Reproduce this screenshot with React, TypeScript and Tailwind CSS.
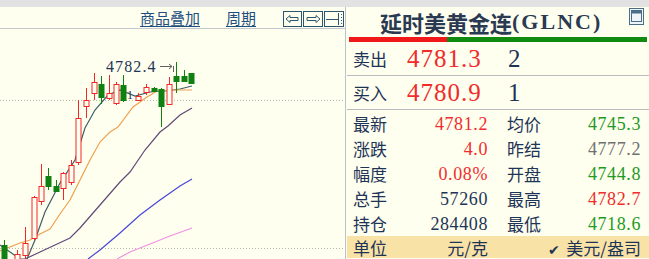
import React from 'react';

const NAVY = 'text-[#1e3456]';
const NUM = { fontFamily: '"Liberation Serif", "Noto Sans CJK SC", serif' };
const CJK = { fontFamily: '"Noto Sans CJK SC", "Liberation Sans", sans-serif' };

type Candle = [number, number, number, number, number, 'r' | 'g'];

const candles: Candle[] = [
  [4, 245, 259, 240, 259, 'g'],
  [17, 254, 262, 250, 262, 'r'],
  [25, 243, 255, 227, 260, 'r'],
  [34, 197, 238, 196, 240, 'r'],
  [41, 186, 201, 164, 205, 'r'],
  [48, 176, 186, 168, 190, 'g'],
  [56, 186, 191, 180, 192, 'g'],
  [63, 173, 188, 172, 200, 'r'],
  [71, 165, 182, 160, 185, 'r'],
  [78, 118, 162, 100, 165, 'r'],
  [86, 100, 106, 88, 118, 'r'],
  [94, 82, 93, 73, 100, 'r'],
  [101, 84, 97, 76, 104, 'g'],
  [109, 93, 98, 75, 100, 'r'],
  [116, 84, 103, 82, 105, 'r'],
  [123, 85, 100, 75, 102, 'g'],
  [138, 96, 100, 93, 101, 'r'],
  [146, 87, 92, 84, 95, 'r'],
  [154, 88, 91, 87, 92, 'g'],
  [161, 89, 106, 88, 127, 'g'],
  [169, 84, 104, 77, 105, 'r'],
  [176, 76, 81, 62, 93, 'g'],
  [184, 76, 81, 70, 82, 'g'],
  [191, 73, 83, 73, 83, 'g'],
];

const lines = [
  {
    color: '#3f5f66',
    pts: '0,245 10,252 20,259 27,259 35,240 45,212 60,183 75,160 85,128 95,110 108,95 120,90 135,96 150,92 165,91 180,89 192,86',
  },
  {
    color: '#f0a050',
    pts: '0,251 20,243 30,240 40,234 50,229 60,214 70,200 80,180 90,160 100,142 110,132 118,127 133,107 147,97 157,91 175,90 192,90',
  },
  {
    color: '#604a78',
    pts: '25,259 40,252 55,245 70,238 80,228 100,205 120,182 130,172 145,150 160,132 168,126 180,115 192,108',
  },
  { color: '#4848d8', pts: '88,259 100,250 120,233 140,215 160,200 180,186 192,179' },
  { color: '#f090e0', pts: '117,259 130,252 150,244 170,236 192,228' },
];

function Chart() {
  return (
    <svg className="block" width="345" height="230" viewBox="0 29 345 230">
      <line x1="0" y1="100.5" x2="345" y2="100.5" stroke="#b8b8b0" strokeDasharray="1 2" />
      <line x1="0" y1="248.5" x2="345" y2="248.5" stroke="#b8b8b0" strokeDasharray="1 2" />
      {lines.map((l, i) => (
        <polyline key={i} points={l.pts} fill="none" stroke={l.color} strokeWidth="1.2" />
      ))}
      {candles.map(([x, t, b, wt, wb, c], i) => {
        const col = c === 'r' ? '#f02828' : '#108010';
        return (
          <g key={i}>
            <line x1={x + 0.5} y1={wt} x2={x + 0.5} y2={t} stroke={col} />
            <line x1={x + 0.5} y1={b} x2={x + 0.5} y2={wb} stroke={col} />
            <rect
              x={x - 2}
              y={t + 0.5}
              width="5"
              height={b - t}
              fill={c === 'r' ? '#fffff0' : col}
              stroke={col}
            />
          </g>
        );
      })}
      <text x="127" y="99" fontSize="12" fill="#1e3456" style={NUM}>
        1
      </text>
      <text x="106" y="72" fontSize="16" letterSpacing="1.1" fill="#1e3456" style={NUM}>
        4782.4
      </text>
      <line x1="160" y1="66.5" x2="172" y2="66.5" stroke="#606060" />
      <polyline points="169,64 172,66.5 169,69" fill="none" stroke="#606060" />
      <line x1="173.5" y1="66" x2="173.5" y2="72" stroke="#606060" />
    </svg>
  );
}

function NavIcons() {
  return (
    <svg width="62" height="16" viewBox="0 0 62 16" className="block">
      <g fill="none" stroke="#2c5670" strokeWidth="1">
        <rect x="0.5" y="0.5" width="18" height="15" />
        <rect x="20.5" y="0.5" width="19" height="15" />
        <rect x="41.5" y="0.5" width="19" height="15" />
        <path d="M3 8 L7 4.5 V6.5 H15 V9.5 H7 V11.5 Z" />
        <path d="M37 8 L33 4.5 V6.5 H24 V9.5 H33 V11.5 Z" />
        <line x1="43" y1="8.5" x2="56" y2="8.5" />
        <line x1="55.5" y1="2" x2="55.5" y2="14" />
      </g>
      <g fill="#2c5670">
        <rect x="58" y="3" width="1" height="1" />
        <rect x="58" y="6" width="1" height="1" />
        <rect x="58" y="9" width="1" height="1" />
        <rect x="58" y="12" width="1" height="1" />
      </g>
    </svg>
  );
}

function Row({
  l1,
  v1,
  c1,
  l2,
  v2,
  c2,
}: {
  l1: string;
  v1: string;
  c1: string;
  l2: string;
  v2: string;
  c2: string;
}) {
  return (
    <div className="flex h-[25px] items-center">
      <span className={`w-[40px] text-[17px] ${NAVY}`} style={CJK}>
        {l1}
      </span>
      <span className={`w-[95px] text-right text-[18px] tracking-[0.6px] ${c1}`} style={NUM}>
        {v1}
      </span>
      <span className={`ml-[19px] w-[40px] text-[17px] ${NAVY}`} style={CJK}>
        {l2}
      </span>
      <span className={`flex-1 text-right text-[18px] tracking-[0.6px] ${c2}`} style={NUM}>
        {v2}
      </span>
    </div>
  );
}

const RED = 'text-[#f02c2c]';
const GREEN = 'text-[#229a22]';

export default function App() {
  return (
    <div className="flex h-[259px] w-[649px] flex-col overflow-hidden bg-[#fffff0] leading-none">
      <div className="h-[7px] shrink-0 bg-[#e2e2e2]" />
      <div className="flex flex-1">
        {/* chart */}
        <div className="flex w-[345px] flex-col">
          <div className="flex h-[22px] shrink-0 items-center justify-end border-b border-[#c4c8cc]">
            <span
              className="text-[15px] text-[#1c4f80] underline underline-offset-2"
              style={CJK}
            >
              商品叠加
            </span>
            <span
              className="ml-[26px] text-[15px] text-[#1c4f80] underline underline-offset-2"
              style={CJK}
            >
              周期
            </span>
            <div className="ml-[27px] mt-[3px]">
              <NavIcons />
            </div>
          </div>
          <Chart />
        </div>
        <div className="w-[2px] border-l border-[#b8c4cc]" />
        {/* quote panel */}
        <div className="flex flex-1 flex-col">
          <div className="relative flex h-[30px] shrink-0 items-center pl-[33px]">
            <span
              className="text-[22px] font-bold text-[#2a3a52]"
              style={{ fontFamily: '"Noto Sans CJK SC", sans-serif' }}
            >
              延时美黄金连
            </span>
            <span
              className="text-[22px] font-bold tracking-[2px] text-[#2a3a52]"
              style={{ fontFamily: '"Liberation Serif", serif' }}
            >
              (GLNC)
            </span>
            <svg
              className="absolute right-[5px] top-[1px]"
              width="15"
              height="17"
              viewBox="0 0 15 17"
            >
              <rect x="0.5" y="0.5" width="14" height="16" fill="#eef4f8" stroke="#4a6e88" />
              <rect x="2.5" y="2.5" width="10" height="11" fill="none" stroke="#4a6e88" />
              <rect x="3" y="3" width="9" height="2.5" fill="#4a6e88" />
            </svg>
          </div>
          <div className="mx-[2px] flex h-[5px] shrink-0">
            <div className="w-[98px] bg-[#f01818]" />
            <div className="flex-1 bg-[#108a10]" />
          </div>
          <div className="flex h-[34px] shrink-0 items-center border-b border-[#b8bcc0] pl-[6px]">
            <span className={`w-[54px] text-[17px] ${NAVY}`} style={CJK}>
              卖出
            </span>
            <span className={`w-[81px] text-[25px] tracking-[1px] ${RED}`} style={NUM}>
              4781.3
            </span>
            <span className={`ml-[20px] text-[25px] ${NAVY}`} style={NUM}>
              2
            </span>
          </div>
          <div className="flex h-[34px] shrink-0 items-center border-b border-[#b8bcc0] pl-[6px]">
            <span className={`w-[54px] text-[17px] ${NAVY}`} style={CJK}>
              买入
            </span>
            <span className={`w-[81px] text-[25px] tracking-[1px] ${RED}`} style={NUM}>
              4780.9
            </span>
            <span className={`ml-[20px] text-[25px] ${NAVY}`} style={NUM}>
              1
            </span>
          </div>
          <div className="flex flex-col pl-[6px] pr-[8px] pt-[1px]">
            <Row l1="最新" v1="4781.2" c1={RED} l2="均价" v2="4745.3" c2={GREEN} />
            <Row l1="涨跌" v1="4.0" c1={RED} l2="昨结" v2="4777.2" c2="text-[#707070]" />
            <Row l1="幅度" v1="0.08%" c1={RED} l2="开盘" v2="4744.8" c2={GREEN} />
            <Row l1="总手" v1="57260" c1={NAVY} l2="最高" v2="4782.7" c2={RED} />
            <Row l1="持仓" v1="284408" c1={NAVY} l2="最低" v2="4718.6" c2={GREEN} />
          </div>
          <div
            className={`flex h-[22px] shrink-0 items-center bg-[#f9e2a6] pl-[6px] pr-[8px] text-[17px] ${NAVY}`}
            style={CJK}
          >
            <span className="w-[40px]">单位</span>
            <span className="w-[95px] text-right">元/克</span>
            <span className="flex-1 text-right">
              <span className="mr-[6px] text-[14px]">✔</span>美元/盎司
            </span>
          </div>
        </div>
      </div>
    </div>
  );
}
